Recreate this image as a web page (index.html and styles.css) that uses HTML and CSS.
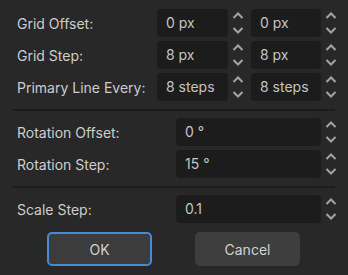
FILE: index.html
```html
<!DOCTYPE html>
<html lang="en">
<head>
  <meta charset="UTF-8" />
  <title>Configure Snap</title>
  <link rel="stylesheet" href="styles.css">
</head>
<body>
  <div class="dialog">
    <div class="section">
      <div class="row">
        <span class="label">Grid Offset:</span>
        <div class="field"><div class="input w71">0 px</div><span class="spin"><svg viewBox="0 0 12 24"><polyline points="1.5,7 6,2.5 10.5,7"/><polyline points="1.5,17 6,21.5 10.5,17"/></svg></span></div>
        <div class="field second"><div class="input w70">0 px</div><span class="spin"><svg viewBox="0 0 12 24"><polyline points="1.5,7 6,2.5 10.5,7"/><polyline points="1.5,17 6,21.5 10.5,17"/></svg></span></div>
      </div>
      <div class="row">
        <span class="label">Grid Step:</span>
        <div class="field"><div class="input w71">8 px</div><span class="spin"><svg viewBox="0 0 12 24"><polyline points="1.5,7 6,2.5 10.5,7"/><polyline points="1.5,17 6,21.5 10.5,17"/></svg></span></div>
        <div class="field second"><div class="input w70">8 px</div><span class="spin"><svg viewBox="0 0 12 24"><polyline points="1.5,7 6,2.5 10.5,7"/><polyline points="1.5,17 6,21.5 10.5,17"/></svg></span></div>
      </div>
      <div class="row">
        <span class="label">Primary Line Every:</span>
        <div class="field"><div class="input w71">8 steps</div><span class="spin"><svg viewBox="0 0 12 24"><polyline points="1.5,7 6,2.5 10.5,7"/><polyline points="1.5,17 6,21.5 10.5,17"/></svg></span></div>
        <div class="field second"><div class="input w70">8 steps</div><span class="spin"><svg viewBox="0 0 12 24"><polyline points="1.5,7 6,2.5 10.5,7"/><polyline points="1.5,17 6,21.5 10.5,17"/></svg></span></div>
      </div>
    </div>

    <div class="sep"></div>

    <div class="section">
      <div class="row">
        <span class="label wide">Rotation Offset:</span>
        <div class="field"><div class="input w145">0 °</div><span class="spin"><svg viewBox="0 0 12 24"><polyline points="1.5,7 6,2.5 10.5,7"/><polyline points="1.5,17 6,21.5 10.5,17"/></svg></span></div>
      </div>
      <div class="row">
        <span class="label wide">Rotation Step:</span>
        <div class="field"><div class="input w145">15 °</div><span class="spin"><svg viewBox="0 0 12 24"><polyline points="1.5,7 6,2.5 10.5,7"/><polyline points="1.5,17 6,21.5 10.5,17"/></svg></span></div>
      </div>
    </div>

    <div class="sep"></div>

    <div class="section">
      <div class="row">
        <span class="label wide">Scale Step:</span>
        <div class="field"><div class="input w145">0.1</div><span class="spin"><svg viewBox="0 0 12 24"><polyline points="1.5,7 6,2.5 10.5,7"/><polyline points="1.5,17 6,21.5 10.5,17"/></svg></span></div>
      </div>
    </div>

    <div class="buttons">
      <button class="btn focused">OK</button>
      <button class="btn">Cancel</button>
    </div>
  </div>
</body>
</html>
```

FILE: styles.css
```css
body {
  margin: 0;
  background: #282828;
  font-family: Inter, "Noto Sans", sans-serif;
  font-size: 14px;
  color: #cdcdcd;
}

.dialog {
  padding: 9px 7px 0 13px;
}

.section {
  display: flex;
  flex-direction: column;
  gap: 4px;
}

.row {
  display: flex;
  align-items: center;
  height: 28px;
}

.label {
  width: 144px;
  padding-left: 4px;
  box-sizing: border-box;
  white-space: nowrap;
}
.label.wide {
  width: 163px;
}

.field {
  display: flex;
  align-items: center;
  height: 28px;
}
.field.second {
  margin-left: 3px;
}

.input {
  height: 28px;
  line-height: 28px;
  background: #1c1c1c;
  border-radius: 4px;
  padding-left: 9px;
  box-sizing: border-box;
  color: #c4c4c4;
  white-space: nowrap;
}
.w71 { width: 71px; }
.w70 { width: 70px; }
.w145 { width: 145px; }

.spin {   /* up/down arrows */
  width: 20px;
  display: flex;
  justify-content: center;
}
.spin svg {
  width: 12px;
  height: 24px;
  fill: none;
  stroke: #a4a4a4;
  stroke-width: 2;
}

.sep {
  height: 2px;
  background: #1c1c1c;
  margin: 8px 6px 7px 0;
}

.buttons {
  display: flex;
  gap: 43px;
  margin-top: 9px;
  padding-left: 34px;
}

.btn {
  width: 105px;
  height: 34px;
  border: 0;
  border-radius: 5px;
  background: #3e3e3e;
  color: #d2d2d2;
  font-family: inherit;
  font-size: 14px;
  padding: 0;
}
.btn.focused {
  background: #3c3c3c;
  border: 2px solid #4a88d8;
}
```
